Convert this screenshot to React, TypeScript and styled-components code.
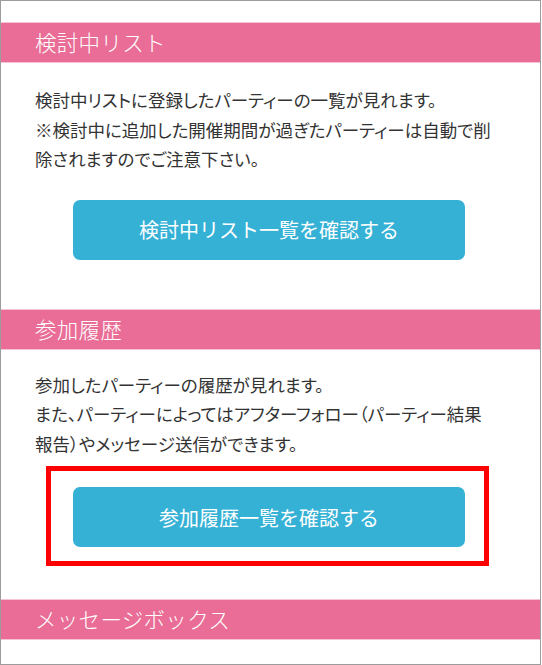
import React from 'react';
import styled, { createGlobalStyle } from 'styled-components';

const GlobalStyle = createGlobalStyle`
  html, body {
    margin: 0;
    padding: 0;
    background: #ffffff;
  }
  body {
    font-family: "Noto Sans CJK JP", "Noto Sans", sans-serif;
    -webkit-font-smoothing: antialiased;
  }
`;

const Frame = styled.div`
  box-sizing: border-box;
  width: 541px;
  height: 665px;
  border: 1px solid #9c9c9c;
  padding-top: 21px;
  display: flex;
  flex-direction: column;
  overflow: hidden;
`;

const Section = styled.section<{ $after: number }>`
  display: flex;
  flex-direction: column;
  margin-bottom: ${props => props.$after}px;
`;

const SectionHeader = styled.h2`
  box-sizing: border-box;
  margin: 0;
  height: 41px;
  padding-left: 34px;
  background: #e96d96;
  border-top: 1px solid #f6c3d4;
  border-bottom: 1px solid #f6c3d4;
  color: #ffffff;
  font-size: 21.5px;
  font-weight: 300;
  line-height: 38px;
  letter-spacing: 0.3px;
`;

const SectionBody = styled.div<{ $top: number }>`
  display: flex;
  flex-direction: column;
  padding: ${props => props.$top}px 34px 0;
`;

const Description = styled.p`
  margin: 0;
  color: #333333;
  font-size: 17.5px;
  line-height: 29.5px;
  white-space: nowrap;
  font-feature-settings: "palt";
`;

const ButtonWrap = styled.div<{ $gap: number }>`
  position: relative;
  align-self: flex-start;
  margin-left: 38px;
  margin-top: ${props => props.$gap}px;
`;

const ActionButton = styled.button`
  display: block;
  width: 392px;
  height: 60px;
  border: none;
  border-radius: 7px;
  background: #36b1d6;
  color: #ffffff;
  font-family: inherit;
  font-size: 20px;
  font-weight: 400;
  cursor: pointer;
`;

const Highlight = styled.div`
  position: absolute;
  left: -27px;
  top: -21px;
  width: 443px;
  height: 100px;
  box-sizing: border-box;
  border: 5px solid #ff0000;
  pointer-events: none;
`;

export default function App() {
  return (
    <>
      <GlobalStyle />
      <Frame>
        <Section $after={49}>
          <SectionHeader>検討中リスト</SectionHeader>
          <SectionBody $top={22}>
            <Description>
              検討中リストに登録したパーティーの一覧が見れます。
              <br />
              ※検討中に追加した開催期間が過ぎたパーティーは自動で削
              <br />
              除されますのでご注意下さい。
            </Description>
            <ButtonWrap $gap={26}>
              <ActionButton>検討中リスト一覧を確認する</ActionButton>
            </ButtonWrap>
          </SectionBody>
        </Section>

        <Section $after={52}>
          <SectionHeader>参加履歴</SectionHeader>
          <SectionBody $top={20}>
            <Description>
              参加したパーティーの履歴が見れます。
              <br />
              また、パーティーによってはアフターフォロー（パーティー結果
              <br />
              報告）やメッセージ送信ができます。
            </Description>
            <ButtonWrap $gap={29}>
              <ActionButton>参加履歴一覧を確認する</ActionButton>
              <Highlight />
            </ButtonWrap>
          </SectionBody>
        </Section>

        <Section $after={0}>
          <SectionHeader>メッセージボックス</SectionHeader>
        </Section>
      </Frame>
    </>
  );
}
